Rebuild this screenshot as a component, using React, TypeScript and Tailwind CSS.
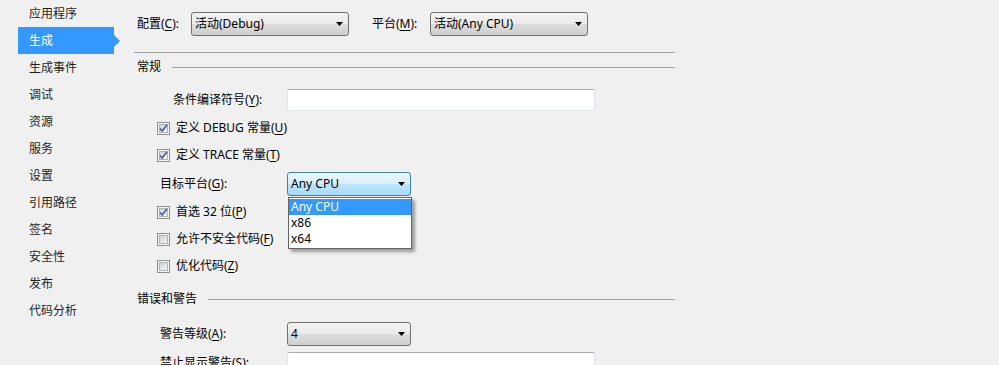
import clsx from "clsx";

const navItems = [
  "应用程序",
  "生成",
  "生成事件",
  "调试",
  "资源",
  "服务",
  "设置",
  "引用路径",
  "签名",
  "安全性",
  "发布",
  "代码分析",
];

function Key({ children }: { children: string }) {
  return <u className="underline-offset-2">{children}</u>;
}

function Arrow() {
  return (
    <svg width="7" height="4" viewBox="0 0 7 4" className="ml-auto mr-[5px] shrink-0">
      <polygon points="0,0 7,0 3.5,4" fill="#000" />
    </svg>
  );
}

function Combo({
  value,
  className,
  focused,
  children,
}: {
  value: string;
  className?: string;
  focused?: boolean;
  children?: React.ReactNode;
}) {
  return (
    <div
      className={clsx(
        "relative flex h-[24px] shrink-0 items-center rounded-[3px] border pl-[3px]",
        focused
          ? "border-[#3c7fb1] bg-[linear-gradient(to_bottom,#eaf6fd_0%,#d9f0fc_50%,#bee6fd_50%,#a7d9f5_100%)]"
          : "border-[#707070] bg-[linear-gradient(to_bottom,#f2f2f2_0%,#ebebeb_50%,#dddddd_50%,#cfcfcf_100%)]",
        className
      )}
    >
      <span className="whitespace-nowrap">{value}</span>
      <Arrow />
      {children}
    </div>
  );
}

function TextBox() {
  return (
    <div className="h-[22px] w-[308px] shrink-0 rounded-[2px] border border-[#e2e3ea] border-t-[#abadb3] border-b-[#e3e9ef] bg-white" />
  );
}

function Check({ checked, label }: { checked?: boolean; label: React.ReactNode }) {
  return (
    <div className="ml-[23px] flex h-[18px] items-center gap-[6px]">
      <svg width="13" height="13" viewBox="0 0 13 13" className="shrink-0">
        <defs>
          <linearGradient id="cbg" x1="0" y1="0" x2="1" y2="1">
            <stop offset="0" stopColor="#cbcfd5" />
            <stop offset="1" stopColor="#f6f6f6" />
          </linearGradient>
        </defs>
        <rect x="0.5" y="0.5" width="12" height="12" fill="#f4f4f4" stroke="#8e8f8f" />
        <rect x="2.5" y="2.5" width="8" height="8" fill="url(#cbg)" stroke="#aeb3b9" strokeWidth="1" />
        {checked && (
          <path d="M3 6.5 L5.2 9 L10 2.8" fill="none" stroke="#4a5f8f" strokeWidth="1.7" />
        )}
      </svg>
      <span>{label}</span>
    </div>
  );
}

function SectionHeader({ title, className }: { title: string; className?: string }) {
  return (
    <div className={clsx("flex h-[16px] w-[541px] items-center", className)}>
      <span className="ml-[3px] leading-none">{title}</span>
      <div className="ml-[11px] h-px flex-1 bg-[#a0a0a0]" />
    </div>
  );
}

export default function App() {
  return (
    <div
      className="flex h-[365px] w-[999px] items-start overflow-hidden bg-[#f0f0f0] text-[12px] text-black"
      style={{ fontFamily: '"Noto Sans", "Noto Sans CJK SC", sans-serif' }}
    >
      <nav className="w-[134px] shrink-0 pl-[18px]">
        <ul>
          {navItems.map((item) => {
            const active = item === "生成";
            return (
              <li
                key={item}
                className={clsx(
                  "relative flex h-[27px] w-[96px] items-center pl-[11px]",
                  active ? "bg-[#3399ff] text-white" : "text-[#1e1e1e]"
                )}
              >
                {item}
                {active && (
                  <span className="absolute right-[-6px] top-[8px] h-0 w-0 border-y-[6px] border-l-[6px] border-y-transparent border-l-[#3399ff]" />
                )}
              </li>
            );
          })}
        </ul>
      </nav>

      <main className="flex flex-1 flex-col pt-[12px] [&>*]:shrink-0">
        <div className="flex h-[24px] items-center">
          <span className="ml-[3px] w-[54px]">
            配置(<Key>C</Key>):
          </span>
          <Combo value="活动(Debug)" className="w-[158px]" />
          <span className="ml-[23px] w-[58px]">
            平台(<Key>M</Key>):
          </span>
          <Combo value="活动(Any CPU)" className="w-[158px]" />
        </div>

        <div className="mt-[16px] h-px w-[541px] bg-[#a0a0a0]" />

        <SectionHeader title="常规" className="mt-[6px]" />

        <div className="mt-[14px] flex h-[22px] items-center">
          <span className="ml-[39px] w-[114px]">
            条件编译符号(<Key>Y</Key>):
          </span>
          <TextBox />
        </div>

        <div className="mt-[8px]">
          <Check
            checked
            label={
              <>
                定义 DEBUG 常量(<Key>U</Key>)
              </>
            }
          />
        </div>
        <div className="mt-[9px]">
          <Check
            checked
            label={
              <>
                定义 TRACE 常量(<Key>T</Key>)
              </>
            }
          />
        </div>

        <div className="mt-[8px] flex h-[24px] items-center">
          <span className="ml-[26px] w-[127px]">
            目标平台(<Key>G</Key>):
          </span>
          <Combo value="Any CPU" focused className="z-10 w-[124px]">
            <div className="absolute left-0 top-[24px] w-[124px] border border-[#646464] bg-white py-px shadow-[3px_3px_3px_rgba(0,0,0,0.35)]">
              <div className="flex h-[16px] items-center bg-[#3399ff] pl-[2px] text-white">Any CPU</div>
              <div className="flex h-[16px] items-center pl-[2px]">x86</div>
              <div className="flex h-[16px] items-center pl-[2px]">x64</div>
            </div>
          </Combo>
        </div>

        <div className="mt-[7px]">
          <Check
            checked
            label={
              <>
                首选 32 位(<Key>P</Key>)
              </>
            }
          />
        </div>
        <div className="mt-[9px]">
          <Check
            label={
              <>
                允许不安全代码(<Key>F</Key>)
              </>
            }
          />
        </div>
        <div className="mt-[9px]">
          <Check
            label={
              <>
                优化代码(<Key>Z</Key>)
              </>
            }
          />
        </div>

        <SectionHeader title="错误和警告" className="mt-[16px]" />

        <div className="mt-[15px] flex h-[24px] items-center">
          <span className="ml-[26px] w-[127px]">
            警告等级(<Key>A</Key>):
          </span>
          <Combo value="4" className="w-[124px]" />
        </div>

        <div className="mt-[6px] flex h-[22px] items-center">
          <span className="ml-[26px] w-[127px]">
            禁止显示警告(<Key>S</Key>):
          </span>
          <TextBox />
        </div>
      </main>
    </div>
  );
}
